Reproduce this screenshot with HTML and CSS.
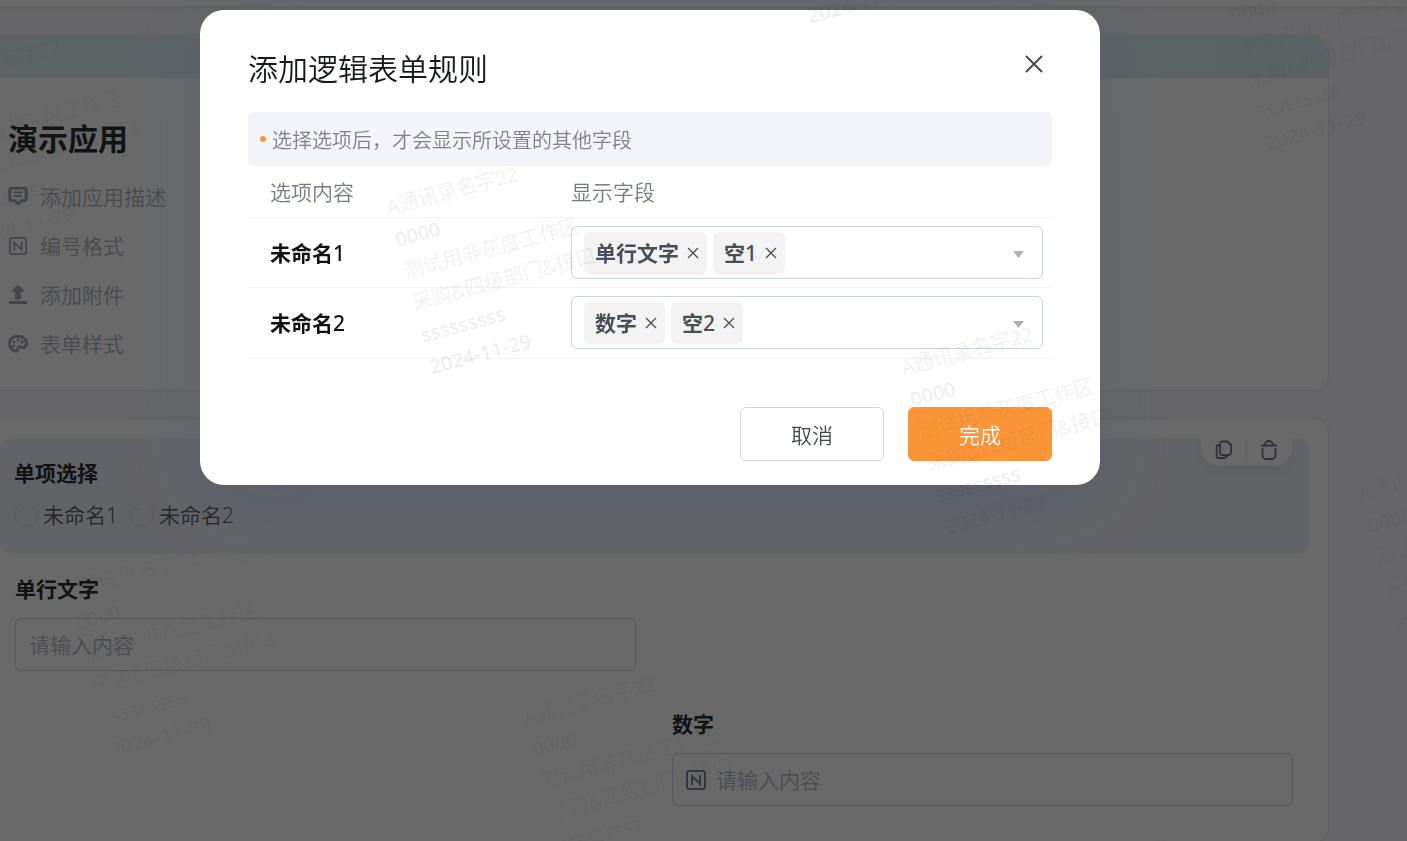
FILE: index.html
```html
<!DOCTYPE html>
<html lang="zh-CN">
<head>
<meta charset="utf-8">
<title>添加逻辑表单规则</title>
<meta name="viewport" content="width=device-width, initial-scale=1">
<link rel="stylesheet" href="styles.css">
</head>
<body>
<svg class="sprite" aria-hidden="true">
  <symbol id="i-number" viewBox="0 0 20 20"><g fill="none" stroke="currentColor" stroke-width="2"><rect x="1" y="1" width="18" height="18" rx="2.5"/><path d="M6 15V6l8 8V5"/></g></symbol>
  <symbol id="i-cross" viewBox="0 0 12 12"><path d="M1 1l10 10M11 1L1 11" fill="none" stroke="currentColor" stroke-width="1.3"/></symbol>
</svg>

<main class="page">
  <div class="topbar"></div>
  <section class="card intro">
    <div class="banner"></div>
    <div class="intro-body">
      <h1 class="app-title">演示应用</h1>
      <ul class="actions">
        <li><button type="button" class="action"><svg class="action-icon" viewBox="0 1 20 20"><path d="M4 2h12a2.200 2.200 0 0 1 2.200 2.200v8.300a2.200 2.200 0 0 1-2.200 2.200h-2.500L10 17.800l-3.500-3.100H4a2.200 2.200 0 0 1-2.200-2.200V4.200A2.200 2.200 0 0 1 4 2z" fill="none" stroke="currentColor" stroke-width="3"/><path d="M6 6.500h8M6 10h8" stroke="currentColor" stroke-width="1.800"/></svg>添加应用描述</button></li>
        <li><button type="button" class="action"><svg class="action-icon" viewBox="-1 -1 22 22"><use href="#i-number" width="20" height="20"/></svg>编号格式</button></li>
        <li><button type="button" class="action"><svg class="action-icon" viewBox="0 0 20 20"><path d="M10 0.500l6 5.500h-3.500v8h-5V6H4z" fill="currentColor" stroke="currentColor" stroke-linejoin="round"/><path d="M2 17.500h16" stroke="currentColor" stroke-width="3" stroke-linecap="round"/></svg>添加附件</button></li>
        <li><button type="button" class="action"><svg class="action-icon" viewBox="0 0 20 20"><path d="M10 2.200c-5 0-8.500 3-8.500 7.400 0 4.300 3.200 7.700 6.500 7.700 2.400 0 1-3.300 2.800-4.300 1.700-1 3.200 1.500 5.400.4 1.500-.8 2.300-2.300 2.300-4.100 0-4.200-3.700-7.100-8.500-7.100z" fill="none" stroke="currentColor" stroke-width="3"/><g fill="currentColor"><circle cx="10" cy="6" r="1.500"/><circle cx="6" cy="8" r="1.500"/><circle cx="14" cy="8" r="1.500"/><circle cx="5.500" cy="12" r="1.500"/></g></svg>表单样式</button></li>
      </ul>
    </div>
  </section>

  <form class="card form">
    <fieldset class="field field-selected">
      <div class="tools">
        <button type="button" class="tool" aria-label="复制"><svg viewBox="0 0 18 20"><g fill="none" stroke="currentColor" stroke-width="1.800" stroke-linejoin="round"><path d="M7 1.500h5.500L16 5v7.500a2.500 2.500 0 0 1-2.500 2.500H7a2 2 0 0 1-2-2V3.500a2 2 0 0 1 2-2z"/><path d="M5 5H3.500A1.800 1.800 0 0 0 1.700 6.800v9.400A1.800 1.800 0 0 0 3.500 18H10l3-3"/></g></svg></button>
        <span class="tools-line"></span>
        <button type="button" class="tool" aria-label="删除"><svg viewBox="0 0 18 20"><g fill="none" stroke="currentColor" stroke-width="1.800"><path d="M1 5.500h16M5 5A4 4 0 0 1 13 5M2.500 8v7.500a3.500 3.500 0 0 0 3.500 3.500h6a3.500 3.500 0 0 0 3.500-3.500V8"/></g></svg></button>
      </div>
      <legend class="label">单项选择</legend>
      <div class="radios">
        <label class="radio"><input type="radio" name="choice">未命名1</label>
        <label class="radio"><input type="radio" name="choice">未命名2</label>
      </div>
    </fieldset>
    <div class="grid">
      <div class="field cell-left">
        <label class="label" for="text">单行文字</label>
        <div class="box"><input id="text" type="text" placeholder="请输入内容"></div>
      </div>
      <div class="field cell-right">
        <label class="label" for="number">数字</label>
        <div class="box"><svg class="box-icon"><use href="#i-number"/></svg><input id="number" type="text" placeholder="请输入内容"></div>
      </div>
    </div>
  </form>
</main>

<div class="mask">
  <div class="modal" role="dialog" aria-modal="true" aria-labelledby="dlg-title">
    <header class="modal-head">
      <h2 id="dlg-title" class="modal-title">添加逻辑表单规则</h2>
      <button type="button" class="close" aria-label="关闭"><svg viewBox="0 0 18 18"><path d="M1 1l16 16M17 1L1 17" stroke="currentColor" stroke-width="2"/></svg></button>
    </header>
    <p class="notice"><span class="dot"></span><span class="notice-text">选择选项后，才会显示所设置的其他字段</span></p>
    <table class="rules">
      <thead><tr><th class="col-option" scope="col">选项内容</th><th scope="col">显示字段</th></tr></thead>
      <tbody>
        <tr>
          <th scope="row">未命名<span class="digit">1</span></th>
          <td><div class="picker">
            <span class="tag">单行文字<button type="button" class="remove" aria-label="移除单行文字"><svg><use href="#i-cross"/></svg></button></span>
            <span class="tag"><span>空<span class="digit">1</span></span><button type="button" class="remove" aria-label="移除空1"><svg><use href="#i-cross"/></svg></button></span>
            <button type="button" class="arrow" aria-label="展开"></button>
          </div></td>
        </tr>
        <tr>
          <th scope="row">未命名<span class="digit">2</span></th>
          <td><div class="picker">
            <span class="tag">数字<button type="button" class="remove" aria-label="移除数字"><svg><use href="#i-cross"/></svg></button></span>
            <span class="tag"><span>空<span class="digit">2</span></span><button type="button" class="remove" aria-label="移除空2"><svg><use href="#i-cross"/></svg></button></span>
            <button type="button" class="arrow" aria-label="展开"></button>
          </div></td>
        </tr>
      </tbody>
    </table>
    <footer class="modal-foot">
      <button type="button" class="btn">取消</button>
      <button type="button" class="btn btn-primary">完成</button>
    </footer>
  </div>
</div>

<svg class="watermark" aria-hidden="true">
  <defs>
    <g id="wm">
      <text y="0">A通讯录名字22</text>
      <text class="latin" y="33">0000</text>
      <text y="66">测试用非灰度工作区</text>
      <text y="99">采购&amp;四级部门&amp;接口</text>
      <text class="latin" y="132">sssssssss</text>
      <text class="latin" y="165">2024-11-29</text>
    </g>
  </defs>
  <use href="#wm" transform="translate(-68 87) rotate(-15)"/>
  <use href="#wm" transform="translate(389 215) rotate(-15)"/>
  <use href="#wm" transform="translate(904 375) rotate(-15)"/>
  <use href="#wm" transform="translate(1361 501) rotate(-15)"/>
  <use href="#wm" transform="translate(69 598) rotate(-15)"/>
  <use href="#wm" transform="translate(526 725) rotate(-15)"/>
  <use href="#wm" transform="translate(1039 886) rotate(-15)"/>
  <use href="#wm" transform="translate(767 -136) rotate(-15)"/>
  <use href="#wm" transform="translate(1224 -9) rotate(-15)"/>
</svg>
</body>
</html>
```
FILE: styles.css
```css
* { box-sizing: border-box; }

body {
  margin: 0;
  height: 100vh;
  overflow: hidden;
  background: #f8f8fc;
  color: #2a2c30;
  font: 350 21px/30px "Noto Sans", "Noto Sans CJK SC", sans-serif;
}

h1, h2, p, ul, fieldset { margin: 0; padding: 0; }
ul { list-style: none; }
fieldset { border: 0; min-width: 0; }
button, input { font: inherit; color: inherit; }
button { padding: 0; border: 0; background: none; cursor: pointer; }
svg { display: block; }
.sprite { position: absolute; width: 0; height: 0; }

/* Form builder page */
.topbar {
  height: 6px;
  margin-bottom: 30px;
  background: #fff;
  box-shadow: 0 1px 8px rgba(60, 60, 80, 0.14);
}

.card {
  margin-right: 79px;
  background: #fff;
  border-radius: 0 14px 14px 0;
  box-shadow: 0 0 3px rgba(60, 65, 90, 0.22);
}

.intro { min-height: 354px; margin-bottom: 29px; overflow: hidden; }
.banner { height: 42px; background: linear-gradient(90deg, #e4f3f8, #e0f5f3 60%, #e0f0f7); }
.intro-body { padding: 40px 8px 16px; }
.app-title { font-size: 30px; line-height: 42px; font-weight: 700; margin-bottom: 12px; }
.action {
  display: flex;
  align-items: center;
  gap: 12px;
  height: 49px;
  color: #b0b4bc;
}
.action-icon { width: 20px; height: 20px; color: #a2a8b4; }

.form { min-height: 423px; padding: 19px 19px 0 0; }
.label { display: block; padding: 0; font-weight: 700; line-height: 30px; }
.field-selected {
  position: relative;
  height: 116px;
  padding: 0 14px;
  background: #eff1f8;
  border-radius: 12px;
}
.field-selected .label { float: left; width: 100%; padding-top: 20px; }
.radios { clear: both; display: flex; gap: 12px; padding-top: 12px; }
.radio { display: flex; align-items: center; gap: 5px; color: #555860; }
.radio input {
  appearance: none;
  width: 24px;
  height: 24px;
  margin: 0;
  border: 1px solid #d2d4dc;
  border-radius: 50%;
}
.tools {
  position: absolute;
  top: 0;
  right: 17px;
  display: flex;
  align-items: center;
  gap: 13px;
  height: 28px;
  padding: 0 14px 4px;
  background: #fff;
  border-radius: 0 0 18px 18px;
  box-shadow: 0 5px 12px rgba(60, 70, 120, 0.07);
}
.tool { color: #77798c; }
.tool svg { width: 18px; height: 20px; }
.tools-line { width: 1px; height: 20px; background: #d8d9e0; }

.grid {
  display: grid;
  grid-template-columns: 1fr 1fr;
  column-gap: 36px;
  padding: 20px 16px 35px 15px;
}
.cell-right { grid-column: 2; grid-row: 2; padding-top: 38px; }
.box {
  display: flex;
  align-items: center;
  gap: 10px;
  height: 53px;
  margin-top: 14px;
  padding: 0 13px;
  border: 1px solid #cdd0df;
  border-radius: 6px;
}
.box input { flex: 1; min-width: 0; padding: 0; border: 0; outline: 0; background: none; }
.box input::placeholder { color: #b5b8c2; opacity: 1; }
.box-icon { width: 20px; height: 20px; color: #7f8394; }

/* Dialog */
.mask {
  position: fixed;
  inset: 0;
  padding: 10px 107px 10px 0;
  background: rgba(0, 0, 0, 0.59);
}
.modal {
  max-width: 900px;
  margin: 0 auto;
  padding: 38px 48px 24px;
  background: #fff;
  border-radius: 24px;
  box-shadow: 0 14px 84px rgba(76, 88, 112, 0.4);
}
.modal-head { display: flex; justify-content: space-between; align-items: flex-start; margin-bottom: 22px; }
.modal-title { color: #15181c; font-size: 30px; line-height: 42px; font-weight: 350; }
.close { padding: 7px 9px; color: #474c54; }
.close svg { width: 18px; height: 18px; }
.notice {
  display: flex;
  align-items: center;
  gap: 6px;
  min-height: 54px;
  padding: 0 12px;
  background: #f4f5fa;
  border-radius: 6px;
  color: #7b828e;
  font-size: 20px;
}
.notice-text { padding-top: 3px; }
.dot { width: 6px; height: 6px; border-radius: 50%; background: #fc9538; }

.rules { width: 100%; border-collapse: separate; border-spacing: 0; table-layout: fixed; }
.rules th, .rules td { padding: 8px 9px 8px 0; border-bottom: 1px solid #f3f3f5; text-align: left; }
.rules th:first-child { padding-left: 22px; }
.rules thead th { height: 52px; color: #747b87; font-weight: 350; }
.rules tbody th { color: #111; font-weight: 700; }
.rules tbody tr:last-child td { padding-bottom: 9px; }
.col-option { width: 323px; }
.digit { font-weight: 500; }
.picker {
  display: flex;
  align-items: center;
  gap: 6px;
  height: 53px;
  padding: 0 18px 0 12px;
  border: 1px solid #cbd3e2;
  border-radius: 6px;
}
.tag {
  display: flex;
  align-items: center;
  gap: 8px;
  height: 42px;
  padding: 0 8px 0 11px;
  background: #f3f3f4;
  border-radius: 6px;
  color: #474e57;
  font-weight: 700;
}
.remove svg { width: 12px; height: 12px; }
.arrow {
  width: 11px;
  height: 7px;
  margin: 4px 0 0 auto;
  background: #a9b0bd;
  clip-path: polygon(0 0, 100% 0, 50% 100%);
}

.modal-foot { display: flex; justify-content: flex-end; gap: 24px; margin-top: 48px; }
.btn {
  width: 144px;
  height: 54px;
  padding-top: 2px;
  border: 1px solid #cbd3e2;
  border-radius: 6px;
  background: #fff;
  color: #414750;
}
.btn-primary { border-color: #fc9538; background: #fc9538; color: #fff; }

.watermark {
  position: fixed;
  inset: 0;
  width: 100%;
  height: 100%;
  pointer-events: none;
  fill: rgba(40, 45, 50, 0.1);
  font-size: 20px;
  font-weight: 300;
}
.latin { font-weight: 400; }
```
